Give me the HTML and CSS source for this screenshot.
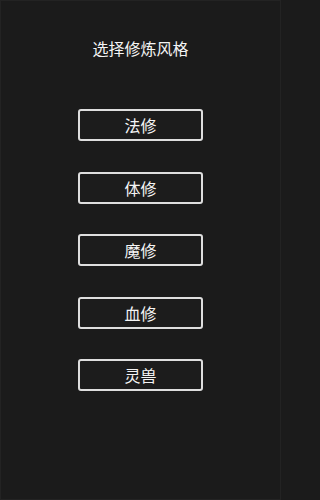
FILE: index.html
```html
<!DOCTYPE html>
<html lang="zh">
<head>
<meta charset="utf-8">
<title>选择修炼风格</title>
<link rel="stylesheet" href="styles.css">
</head>
<body>
<div class="screen">
  <h1 class="title">选择修炼风格</h1>
  <div class="options">
    <button class="option">法修</button>
    <button class="option">体修</button>
    <button class="option">魔修</button>
    <button class="option">血修</button>
    <button class="option">灵兽</button>
  </div>
</div>
</body>
</html>
```

FILE: styles.css
```css
html, body {
  margin: 0;
  padding: 0;
  background: #1b1b1b;
}
.screen {
  box-sizing: border-box;
  width: 281px;
  height: 500px;
  border: 1px solid #232323;
  background: #1b1b1b;
  display: flex;
  flex-direction: column;
  align-items: center;
  padding-top: 38px;
  font-family: "Noto Sans CJK SC", "Noto Sans", sans-serif;
  color: #f0f0f0;
}
.title {
  margin: 0;
  font-size: 16px;
  line-height: 18px;
  font-weight: normal;
  color: #f4f4f4;
}
.options {
  margin-top: 52px;
  display: flex;
  flex-direction: column;
  gap: 30.6px;
}
.option {
  box-sizing: border-box;
  width: 125px;
  height: 32px;
  padding: 0;
  border: 2px solid #dedede;
  border-radius: 3px;
  background: #1c1c1c;
  color: #f4f4f4;
  font-family: "Noto Sans CJK SC", "Noto Sans", sans-serif;
  font-size: 16px;
  line-height: 16px;
}
```
